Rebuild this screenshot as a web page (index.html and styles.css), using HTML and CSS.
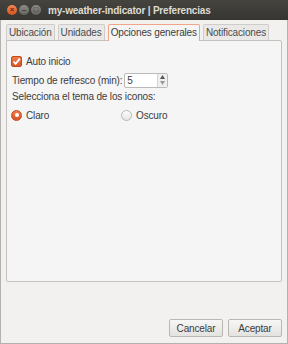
FILE: index.html
```html
<!DOCTYPE html>
<html lang="es">
  <head>
    <meta charset="UTF-8" />
    <title>my-weather-indicator | Preferencias</title>
    <link rel="stylesheet" href="styles.css">
  </head>
  <body>
    <div class="window">
      <!-- Title bar -->
      <div class="titlebar">
        <div class="controls">
          <span class="ctl close">&#215;</span>
          <span class="ctl">&#8211;</span>
          <span class="ctl">&#9633;</span>
        </div>
        <div class="title">my-weather-indicator | Preferencias</div>
      </div>

      <div class="content">
        <!-- Tabs -->
        <div class="tabs">
          <div class="tab">Ubicación</div>
          <div class="tab">Unidades</div>
          <div class="tab active">Opciones generales</div>
          <div class="tab">Notificaciones</div>
        </div>

        <div class="panel">
          <label class="check-row">
            <span class="checkbox">
              <svg width="9" height="9" viewBox="0 0 9 9"><path d="M1.5 4.5 L3.6 6.8 L7.8 1.6" fill="none" stroke="#fff" stroke-width="1.8"/></svg>
            </span>
            Auto inicio
          </label>

          <div class="spin-row">
            <span>Tiempo de refresco (min):</span>
            <div class="spin">
              <span class="spin-value">5</span>
              <span class="spin-arrows">
                <svg width="7" height="12" viewBox="0 0 7 12"><path d="M3.5 1 L6 5 L1 5 Z" fill="#555"/><path d="M3.5 11 L6 7 L1 7 Z" fill="#999"/></svg>
              </span>
            </div>
          </div>

          <div class="section-label">Selecciona el tema de los iconos:</div>

          <div class="radio-row">
            <label class="radio-item">
              <span class="radio checked"></span>
              Claro
            </label>
            <label class="radio-item">
              <span class="radio"></span>
              Oscuro
            </label>
          </div>
        </div>

        <div class="actions">
          <button class="button">Cancelar</button>
          <button class="button">Aceptar</button>
        </div>
      </div>
    </div>
  </body>
</html>
```

FILE: styles.css
```css
body {
  margin: 0;
  font-family: "Liberation Sans", Arial, sans-serif;
  font-size: 10px;
  letter-spacing: -0.15px;
  color: #3c3c3c;
  background-color: #f2f1f0;
}
.window {
  width: 288px;
  height: 344px;
  box-sizing: border-box;
  display: flex;
  flex-direction: column;
  background-color: #f2f1f0;
  border-left: 1px solid #b4b2ae;
  border-right: 1px solid #b4b2ae;
  border-bottom: 1px solid #b4b2ae;
}
.titlebar {
  height: 20px;
  display: flex;
  align-items: center;
  background: linear-gradient(#45443f, #363531);
  margin: 0 -1px;
}
.controls {
  display: flex;
  gap: 2px;
  padding-left: 7px;
  width: 40px;
}
.ctl {
  width: 10px;
  height: 10px;
  border-radius: 50%;
  background: linear-gradient(#8c8b85, #64635e);
  color: #3a3935;
  font-size: 8px;
  line-height: 10px;
  text-align: center;
  font-weight: bold;
}
.ctl.close {
  background: linear-gradient(#f2885a, #d9531e);
  color: #5a2a14;
}
.title {
  font-weight: bold;
  font-size: 10px;
  letter-spacing: -0.2px;
  color: #dfdbd2;
  padding-left: 1px;
}
.content {
  flex: 1;
  display: flex;
  flex-direction: column;
  padding: 4px 5px 6px 5px;
}
.tabs {
  display: flex;
  gap: 3px;
  height: 16px;
  align-items: flex-end;
  white-space: nowrap;
}
.tab {
  height: 15px;
  line-height: 15px;
  padding: 0 2px;
  background-color: #eae9e7;
  border: 1px solid #cfcdca;
  border-bottom: none;
  border-radius: 2px 2px 0 0;
  color: #4c4c4c;
}
.tab.active {
  height: 16px;
  line-height: 16px;
  background-color: #f5f5f5;
  border-color: #f0a58a;
  color: #3c3c3c;
  position: relative;
  z-index: 1;
  margin-bottom: -1px;
}
.panel {
  height: 242px;
  background-color: #f5f5f5;
  border: 1px solid #c4c2bf;
  border-radius: 0 2px 2px 2px;
  padding: 14px 4px 0 4px;
  box-sizing: border-box;
}
.check-row {
  display: flex;
  align-items: center;
  gap: 4px;
  height: 13px;
}
.checkbox {
  width: 11px;
  height: 11px;
  border-radius: 2px;
  background: linear-gradient(#f07d4a, #d65526);
  border: 1px solid #c44a1c;
  box-sizing: border-box;
  display: flex;
  align-items: center;
  justify-content: center;
}
.spin-row {
  display: flex;
  align-items: center;
  gap: 2px;
  margin-top: 4px;
  height: 16px;
  padding-left: 1px;
}
.spin {
  display: flex;
  width: 44px;
  height: 15px;
  background-color: #fff;
  border: 1px solid #bcbab6;
  border-radius: 2px;
  box-sizing: border-box;
}
.spin-value {
  flex: 1;
  padding-left: 2px;
  line-height: 13px;
}
.spin-arrows {
  width: 9px;
  border-left: 1px solid #d6d4d0;
  display: flex;
  align-items: center;
  justify-content: center;
  background-color: #f0efed;
}
.section-label {
  margin-top: 2px;
  height: 14px;
  line-height: 14px;
  padding-left: 1px;
}
.radio-row {
  display: flex;
  margin-top: 4px;
  height: 14px;
  align-items: center;
}
.radio-item {
  display: flex;
  align-items: center;
  gap: 4px;
  width: 110px;
}
.radio {
  width: 11px;
  height: 11px;
  border-radius: 50%;
  border: 1px solid #b8b6b2;
  background: linear-gradient(#fdfdfd, #e6e5e3);
  box-sizing: border-box;
  display: flex;
  align-items: center;
  justify-content: center;
}
.radio.checked {
  background: linear-gradient(#f07d4a, #d65526);
  border-color: #c44a1c;
}
.radio.checked::after {
  content: "";
  width: 4px;
  height: 4px;
  border-radius: 50%;
  background-color: #fff;
}
.actions {
  margin-top: auto;
  display: flex;
  justify-content: flex-end;
  gap: 5px;
}
.button {
  font-family: inherit;
  font-size: 10px;
  letter-spacing: -0.15px;
  color: #3c3c3c;
  width: 54px;
  height: 18px;
  padding: 0;
  background: linear-gradient(#f7f7f6, #e3e2df);
  border: 1px solid #b9b7b3;
  border-radius: 2px;
}
```
